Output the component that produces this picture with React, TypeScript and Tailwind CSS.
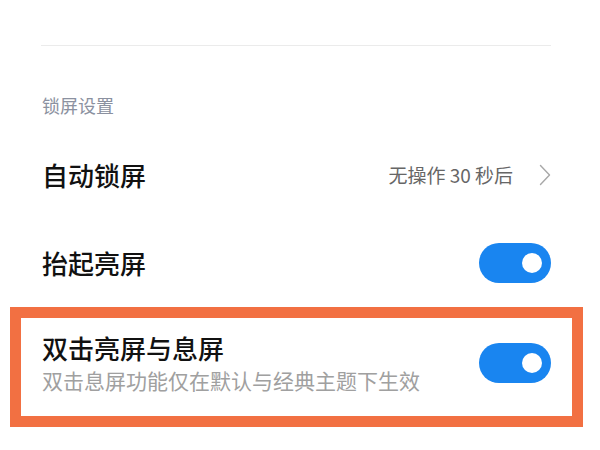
import React from "react";

function Toggle() {
  return (
    <div className="flex h-[40px] w-[72px] shrink-0 items-center justify-end rounded-full bg-[#1985f0] pr-[9px]">
      <div className="h-[20px] w-[20px] rounded-full bg-white" />
    </div>
  );
}

function Chevron() {
  return (
    <svg width="12" height="22" viewBox="0 0 12 22" fill="none">
      <path d="M1.5 1.5 L10.5 11 L1.5 20.5" stroke="#a8a8a8" strokeWidth="1.4" strokeLinecap="round" strokeLinejoin="round" />
    </svg>
  );
}

export default function App() {
  const font = { fontFamily: '"Noto Sans CJK SC", "Noto Sans", sans-serif' };

  return (
    <div className="h-[450px] w-[600px] overflow-hidden bg-white" style={font}>
      <div className="h-[45px]" />
      <div className="ml-[41px] mr-[49px] h-px bg-[#ebebeb]" />

      <div className="mt-[47px] h-[24px] pl-[42px] text-[18px] leading-[24px] text-[#8b91a0]">锁屏设置</div>

      <div className="mt-[14px] flex h-[88px] items-center justify-between pl-[42px] pr-[49px]">
        <span className="text-[26px] leading-[34px] font-medium text-[#111]">自动锁屏</span>
        <div className="flex items-center gap-[26px]">
          <span className="text-[19px] leading-[24px] text-[#666]">无操作 30 秒后</span>
          <Chevron />
        </div>
      </div>

      <div className="flex h-[88px] items-center justify-between pl-[42px] pr-[49px]">
        <span className="text-[26px] leading-[34px] font-medium text-[#111]">抬起亮屏</span>
        <Toggle />
      </div>

      <div className="ml-[10px] h-[120px] w-[573px] border-[11px] border-[#f27042]">
        <div className="flex h-full items-center justify-between pb-[8px] pl-[21px] pr-[21px]">
          <div className="flex flex-col">
            <span className="text-[26px] leading-[32px] font-medium text-[#111]">双击亮屏与息屏</span>
            <span className="mt-[2px] text-[21px] leading-[28px] text-[#a0a0a0]">双击息屏功能仅在默认与经典主题下生效</span>
          </div>
          <Toggle />
        </div>
      </div>
    </div>
  );
}
